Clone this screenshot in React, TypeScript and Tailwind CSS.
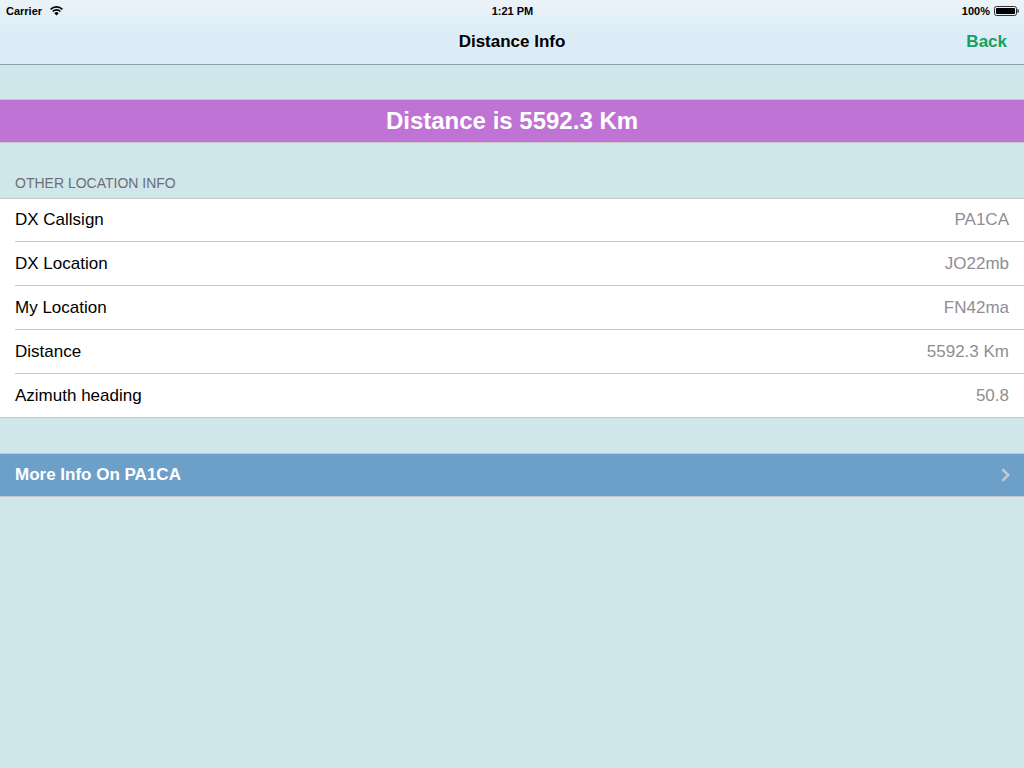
import React from 'react';

interface IInfoRow {
  label: string;
  value: string;
}

const LOCATION_INFO: IInfoRow[] = [
  { label: 'DX Callsign', value: 'PA1CA' },
  { label: 'DX Location', value: 'JO22mb' },
  { label: 'My Location', value: 'FN42ma' },
  { label: 'Distance', value: '5592.3 Km' },
  { label: 'Azimuth heading', value: '50.8' },
];

const WifiIcon = () => (
  <svg width="13" height="10" viewBox="0 0 13 10" fill="none" aria-hidden="true">
    <path d="M0.6 3.3A8.4 8.4 0 0 1 12.4 3.3" stroke="#000" strokeWidth="1.7" />
    <path d="M2.7 5.5A5.3 5.3 0 0 1 10.3 5.5" stroke="#000" strokeWidth="1.6" />
    <path d="M6.5 9.4L4.3 7.2A3.1 3.1 0 0 1 8.7 7.2Z" fill="#000" />
  </svg>
);

const BatteryIcon = () => (
  <svg width="25" height="10" viewBox="0 0 25 10" fill="none" aria-hidden="true">
    <rect x="0.5" y="0.5" width="22" height="9" rx="2" stroke="#333" />
    <rect x="2" y="2" width="19" height="6" rx="0.8" fill="#000" />
    <path d="M23.5 3C25.2 3.6 25.2 6.4 23.5 7Z" fill="#000" />
  </svg>
);

const ChevronIcon = () => (
  <svg width="9" height="14" viewBox="0 0 9 14" fill="none" aria-hidden="true">
    <path d="M1.4 1.2L7.2 7L1.4 12.8" stroke="#c7c7cc" strokeWidth="2.6" />
  </svg>
);

const StatusBar = () => (
  <div className="grid grid-cols-3 items-center h-5 pt-0.5 pl-1.5 pr-[5px] text-[11px] font-bold">
    <div className="flex items-center gap-2">
      <span>Carrier</span>
      <WifiIcon />
    </div>
    <div className="text-center">1:21 PM</div>
    <div className="flex items-center justify-end gap-1">
      <span>100%</span>
      <BatteryIcon />
    </div>
  </div>
);

const App = () => {
  return (
    <div className="min-h-screen bg-[#cfe7ea] font-['Liberation_Sans',Arial,sans-serif] text-[17px] text-black">
      <header className="border-b border-[#8f9ea8] bg-linear-to-b from-[#ebf3f8] via-[#dcedf6] to-[#deebf7]">
        <StatusBar />
        <nav className="grid grid-cols-3 items-center h-11 px-[17px] font-bold">
          <h1 className="col-start-2 text-center">Distance Info</h1>
          <button type="button" className="justify-self-end text-[#159f62]">
            Back
          </button>
        </nav>
      </header>

      <main>
        <div className="flex items-center justify-center h-11 mt-[34px] border-y border-[#c8c7cc] bg-[#bf73d4] text-2xl font-bold text-white">
          Distance is 5592.3 Km
        </div>

        <section>
          <h2 className="mt-8 px-[15px] pb-[7px] text-[14px] leading-4 text-[#6d6d72]">
            OTHER LOCATION INFO
          </h2>
          <dl className="pl-[15px] border-y border-[#c8c7cc] bg-white">
            {LOCATION_INFO.map(({ label, value }) => (
              <div
                key={label}
                className="flex items-center justify-between h-11 pr-[15px] border-b border-[#c8c7cc] first:h-[43px] last:h-[43px] last:border-b-0"
              >
                <dt>{label}</dt>
                <dd className="text-[#8e8e93]">{value}</dd>
              </div>
            ))}
          </dl>
        </section>

        <button
          type="button"
          className="flex items-center justify-between w-full h-11 mt-[35px] pl-[15px] pr-3.5 border-y border-[#c8c7cc] bg-[#6ca0c9] font-bold text-white"
        >
          More Info On PA1CA
          <ChevronIcon />
        </button>
      </main>
    </div>
  );
};

export default App;
